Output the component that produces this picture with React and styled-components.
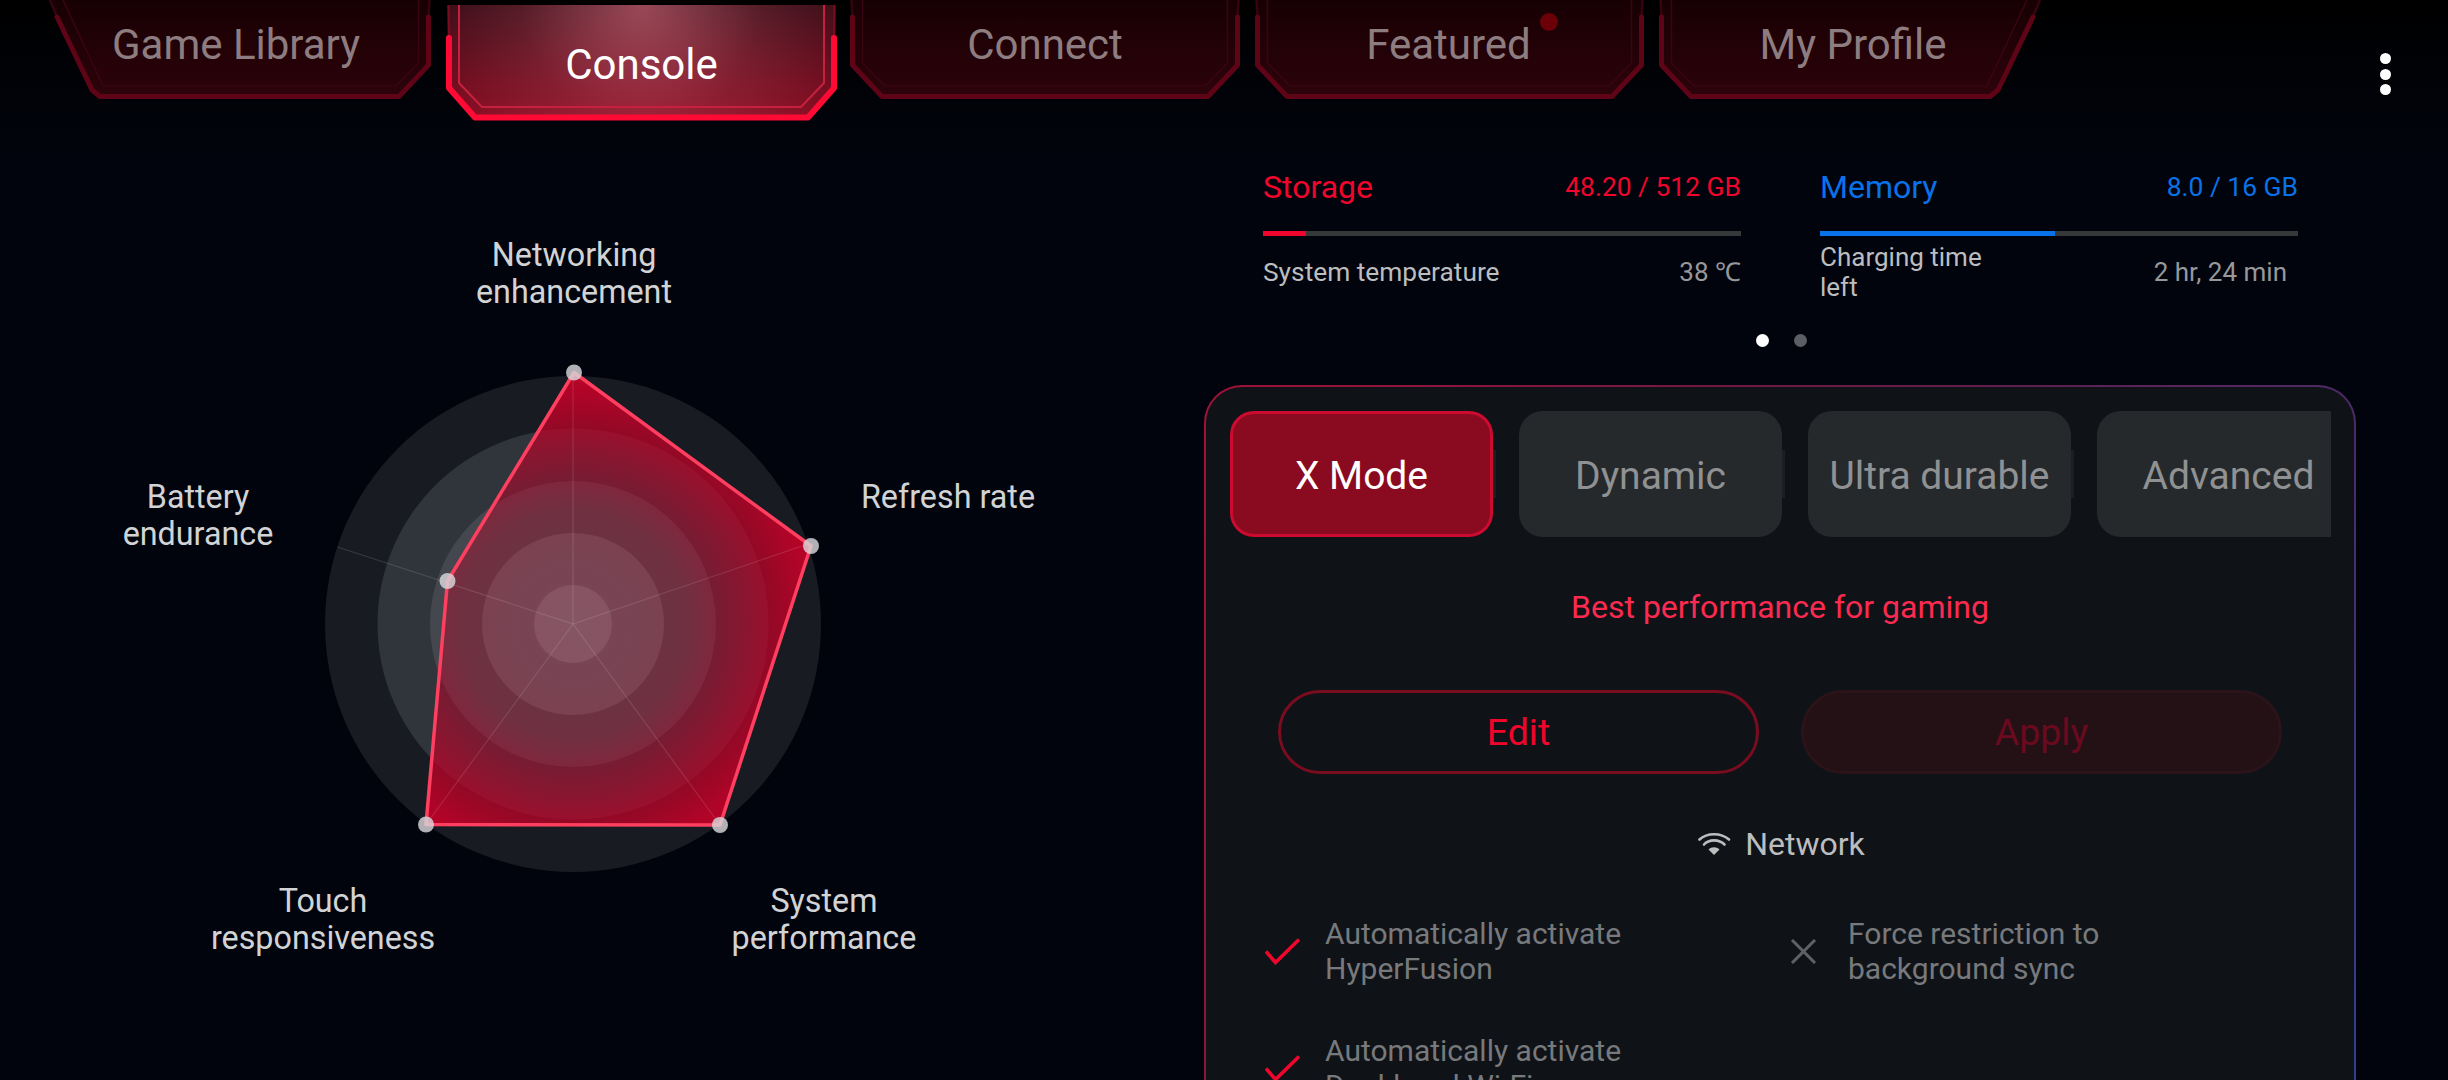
import styled, { createGlobalStyle } from 'styled-components';

const GlobalStyle = createGlobalStyle`
  * { box-sizing: border-box; }
  html, body { margin: 0; padding: 0; background: #01040c; }
  body { font-family: Roboto, "Liberation Sans", sans-serif; }
`;

const Screen = styled.div`
  width: 2448px;
  height: 1080px;
  overflow: hidden;
  display: flex;
  flex-direction: column;
  background: linear-gradient(180deg, #000000 0%, #01040c 14%, #01040c 100%);
`;

const Nav = styled.nav`
  display: flex;
  align-items: flex-start;
  gap: 15px;
  height: 121px;
  padding-left: 49px;
  flex-shrink: 0;
`;

const Tab = styled.div`
  position: relative;
  flex-shrink: 0;
  width: ${(p) => p.$width}px;
  height: ${(p) => (p.$active ? 116 : 99)}px;
  margin-top: ${(p) => (p.$active ? 5 : 0)}px;
  margin-right: ${(p) => (p.$active ? -2 : 0)}px;
  padding: ${(p) => (p.$active ? '3px 0 0' : '0 0 10px')};
  display: flex;
  align-items: center;
  justify-content: center;
  font-size: 42px;
  color: ${(p) => (p.$active ? '#ffffff' : '#8d7d80')};
`;

const TabShape = styled.svg`
  position: absolute;
  left: 0;
  top: 0;
  overflow: visible;
`;

const TabLabel = styled.span`
  position: relative;
  margin-left: ${(p) => p.$nudge || 0}px;
`;

const NoticeDot = styled.i`
  position: absolute;
  left: 285px;
  top: 13px;
  width: 18px;
  height: 18px;
  border-radius: 50%;
  background: #6b0008;
`;

const Kebab = styled.div`
  margin: 53px 57px 0 auto;
  display: flex;
  flex-direction: column;
  gap: 4.5px;

  i {
    width: 11px;
    height: 11px;
    border-radius: 50%;
    background: #ffffff;
  }
`;

const Main = styled.main`
  display: flex;
  flex: 1;
  min-height: 0;
`;

const RadarCanvas = styled.section`
  position: relative;
  width: 1204px;
  height: 959px;
  flex-shrink: 0;

  svg { display: block; }
`;

const AxisLabel = styled.div`
  position: absolute;
  left: ${(p) => p.$x}px;
  top: ${(p) => p.$y}px;
  transform: translateX(-50%);
  font-size: 32.3px;
  line-height: 37.5px;
  color: #d2d3d5;
  text-align: center;
  white-space: nowrap;
`;

const RightColumn = styled.section`
  width: 1152px;
  flex-shrink: 0;
`;

const Stats = styled.div`
  display: grid;
  grid-template-columns: 478px 478px;
  column-gap: 79px;
  margin: 47px 0 0 59px;
`;

const StatHead = styled.div`
  display: flex;
  align-items: center;
  justify-content: space-between;
  height: 38px;
  color: ${(p) => p.$color};
`;

const StatName = styled.span`
  font-size: 32px;
`;

const StatValue = styled.span`
  font-size: 26.4px;
`;

const Track = styled.div`
  height: 5px;
  margin-top: 25px;
  background: #37383a;
`;

const Fill = styled.div`
  height: 100%;
  background: ${(p) => p.$color};
`;

const StatRow = styled.div`
  display: flex;
  align-items: center;
  justify-content: space-between;
  height: 60px;
  margin-top: 6px;
  padding-right: ${(p) => p.$inset || 0}px;
  font-size: 26px;
  line-height: 30px;
`;

const RowLabel = styled.span`
  max-width: 200px;
  color: #bcbdbf;
`;

const SingleLabel = styled(RowLabel)`
  max-width: none;
  font-size: 26.3px;
`;

const RowValue = styled.span`
  color: #97989a;
`;

const Pager = styled.div`
  display: flex;
  justify-content: center;
  gap: 25px;
  margin: 32px 0 0 2px;
`;

const PagerDot = styled.i`
  width: 13px;
  height: 13px;
  border-radius: 50%;
  background: ${(p) => (p.$on ? '#ffffff' : '#5b5e63')};
`;

const Panel = styled.div`
  height: 800px;
  margin-top: 38px;
  border: 2px solid transparent;
  border-radius: 38px;
  background:
    linear-gradient(#0f1317, #0f1317) padding-box,
    linear-gradient(105deg, #a01238 0%, #6a1a44 45%, #4c2a66 85%, #2a4592 100%) border-box;
  display: flex;
  flex-direction: column;
  align-items: center;
  overflow: hidden;
`;

const ModeScroller = styled.div`
  align-self: flex-start;
  display: flex;
  gap: 26px;
  width: 1101px;
  margin: 24px 0 0 24px;
  overflow: hidden;
  flex-shrink: 0;
`;

const Mode = styled.div`
  position: relative;
  flex: 0 0 263px;
  height: 126px;
  padding-top: 4px;
  border-radius: 24px;
  display: flex;
  align-items: center;
  justify-content: center;
  font-size: 39px;
  color: ${(p) => (p.$active ? '#ffffff' : '#8f9193')};
  background: ${(p) => (p.$active ? '#8a0a20' : '#26292c')};
  border: ${(p) => (p.$active ? '3px solid #cd0a30' : 'none')};
`;

const ModeSliver = styled.i`
  flex: 0 0 3px;
  height: 48px;
  margin: 39px -3px 0 -26px;
  background: #1b1f22;
`;

const Tagline = styled.div`
  margin-top: 50px;
  height: 40px;
  line-height: 40px;
  font-size: 32px;
  color: #fb2a50;
`;

const Actions = styled.div`
  display: flex;
  gap: 42px;
  margin-top: 63px;
`;

const Pill = styled.div`
  width: 481px;
  height: 84px;
  border-radius: 42px;
  display: flex;
  align-items: center;
  justify-content: center;
  font-size: 37.5px;
  color: ${(p) => (p.$disabled ? '#6b0a1e' : '#f0052d')};
  background: ${(p) => (p.$disabled ? '#241116' : 'transparent')};
  border: 3px solid ${(p) => (p.$disabled ? '#2a1319' : '#7a0c20')};
`;

const Section = styled.div`
  display: flex;
  align-items: center;
  gap: 14px;
  margin: 50px 0 0 3px;
  height: 40px;
  font-size: 32px;
  color: #bcbdbf;
`;

const Features = styled.div`
  align-self: flex-start;
  display: grid;
  grid-template-columns: 525px 500px;
  row-gap: 47px;
  margin: 52px 0 0 59px;
`;

const Feature = styled.div`
  display: flex;
  align-items: center;
  gap: ${(p) => p.$gap}px;
  font-size: 30px;
  line-height: 35px;
  color: #77797c;
`;

const FeatureWide = styled(Feature)`
  grid-column: 1 / 3;
`;

// corner points of a tab edge, measured from the tab's own left side
const edges = {
  slant: { top: [1, 0], start: [8, 17], knee: [43, 90], foot: [51, 96.5], innerTop: [14, 0], innerFoot: [54, 86] },
  chamfer: { top: [1.5, 0], start: [2.5, 17], knee: [2.5, 65], foot: [32, 96.5], innerTop: [12.5, 0], innerKnee: [12.5, 63], innerFoot: [35, 86] },
  active: { top: [2.5, 0], start: [3, 33], knee: [3, 83], foot: [29, 112.5], innerTop: [13, 0], innerKnee: [13, 78], innerFoot: [36, 102] },
};

function TabFrame({ id, width, height, left, right, active }) {
  const l = edges[left];
  const r = edges[right];
  const L = (p) => `${p[0]},${p[1]}`;
  const R = (p) => `${width - p[0]},${p[1]}`;

  const fill = `M${L(l.top)} L${L(l.start)} L${L(l.knee)} L${L(l.foot)} L${R(r.foot)} L${R(r.knee)} L${R(r.start)} L${R(r.top)} Z`;
  const heavy = `M${L(l.start)} L${L(l.knee)} L${L(l.foot)} L${R(r.foot)} L${R(r.knee)} L${R(r.start)}`;
  const thin = `M${L(l.top)} L${L(l.start)} M${R(r.top)} L${R(r.start)}`;
  const innerLeft = [l.innerTop, l.innerKnee, l.innerFoot].filter(Boolean).map(L);
  const innerRight = [r.innerFoot, r.innerKnee, r.innerTop].filter(Boolean).map(R);
  const inner = `M${[...innerLeft, ...innerRight].join(' L')}`;

  return (
    <TabShape width={width} height={height} viewBox={`0 0 ${width} ${height}`}>
      <defs>
        <linearGradient id={`${id}-base`} x1="0" y1="0" x2="0" y2="1">
          <stop offset="0" stopColor={active ? '#30060f' : '#170003'} />
          <stop offset="1" stopColor={active ? '#84071d' : '#2d030b'} />
        </linearGradient>
        <radialGradient id={`${id}-glow`} gradientUnits="userSpaceOnUse" cx={width / 2} cy="0" r="240">
          <stop offset="0" stopColor="#ff8ca0" stopOpacity={active ? 0.5 : 0} />
          <stop offset="0.5" stopColor="#ff8ca0" stopOpacity={active ? 0.17 : 0} />
          <stop offset="1" stopColor="#ff8ca0" stopOpacity="0" />
        </radialGradient>
      </defs>
      <path d={fill} fill={`url(#${id}-base)`} />
      <path d={fill} fill={`url(#${id}-glow)`} />
      <path d={inner} fill="none" stroke={active ? '#c5213f' : '#3a0512'} strokeWidth={active ? 2 : 1.5} />
      <path d={thin} fill="none" stroke={active ? '#7a0a20' : '#36040f'} strokeWidth="2.5" />
      <path d={heavy} fill="none" stroke={active ? '#ff0a34' : '#5e0416'} strokeWidth={active ? 6 : 5} strokeLinejoin="round" strokeLinecap="round" />
    </TabShape>
  );
}

function Radar() {
  const rings = [
    [248, '#181c22'],
    [195.5, '#30343b'],
    [143, '#44484e'],
    [91, '#5a5e64'],
    [39, '#6e7278'],
  ];
  const points = [[574, 372.5], [811, 546], [720, 825], [426, 824.5], [447.5, 581]];
  const axes = [[573, 372.5], [811, 543], [720, 825], [426, 824.5], [337.5, 547]];
  const outline = points.map((p) => p.join(',')).join(' ');

  return (
    <svg width="1204" height="959" viewBox="0 121 1204 959">
      <defs>
        <radialGradient id="radar-fill" gradientUnits="userSpaceOnUse" cx="573" cy="624" r="300">
          <stop offset="0" stopColor="#c80028" stopOpacity="0.25" />
          <stop offset="0.2" stopColor="#c80028" stopOpacity="0.28" />
          <stop offset="0.38" stopColor="#c80028" stopOpacity="0.33" />
          <stop offset="0.57" stopColor="#c80028" stopOpacity="0.58" />
          <stop offset="0.77" stopColor="#c80028" stopOpacity="0.86" />
          <stop offset="0.97" stopColor="#d00028" stopOpacity="1" />
        </radialGradient>
      </defs>
      {rings.map(([r, fill]) => (
        <circle key={r} cx="573" cy="624" r={r} fill={fill} />
      ))}
      <polygon points={outline} fill="url(#radar-fill)" />
      {axes.map(([x, y]) => (
        <line key={x} x1="573" y1="624" x2={x} y2={y} stroke="#ffffff" strokeOpacity="0.13" strokeWidth="1.1" />
      ))}
      <polygon points={outline} fill="none" stroke="#ff3f60" strokeWidth="3.5" strokeLinejoin="round" />
      {points.map(([x, y]) => (
        <circle key={x} cx={x} cy={y} r="8" fill="#d8d8da" fillOpacity="0.82" />
      ))}
    </svg>
  );
}

function WifiIcon() {
  return (
    <svg width="33" height="24" viewBox="0 0 33 24" fill="none" stroke="#bcbdbf" strokeWidth="2.6" strokeLinecap="round">
      <path d="M1.5 7.5 C9 0.5 23 0.5 31 7.5" />
      <path d="M6 12.5 C11 7 21 7 26.5 12.5" />
      <path d="M10.5 17.5 L16 23 L21.5 17.5 C18.5 14.5 13.5 14.5 10.5 17.5 Z" fill="#bcbdbf" stroke="none" />
    </svg>
  );
}

function CheckIcon() {
  return (
    <svg width="35" height="27" viewBox="0 0 35 27" fill="none" stroke="#f0052d" strokeWidth="3.6">
      <path d="M1 13.5 L10.5 24.5 L34 1.5" />
    </svg>
  );
}

function CrossIcon() {
  return (
    <svg width="27" height="25" viewBox="0 0 27 25" fill="none" stroke="#5f6265" strokeWidth="3">
      <path d="M2 1 L25 24 M25 1 L2 24" />
    </svg>
  );
}

const tabs = [
  { key: 'game', label: 'Game Library', width: 382, left: 'slant', right: 'chamfer', nudge: -8 },
  { key: 'console', label: 'Console', width: 391, left: 'active', right: 'active', active: true },
  { key: 'connect', label: 'Connect', width: 390, left: 'chamfer', right: 'chamfer' },
  { key: 'featured', label: 'Featured', width: 389, left: 'chamfer', right: 'chamfer', notice: true, nudge: -2 },
  { key: 'profile', label: 'My Profile', width: 382, left: 'chamfer', right: 'slant', nudge: 6 },
];

const labels = [
  { x: 574, y: 115.5, lines: ['Networking', 'enhancement'] },
  { x: 948, y: 357.5, lines: ['Refresh rate'] },
  { x: 824, y: 761.5, lines: ['System', 'performance'] },
  { x: 323, y: 761.5, lines: ['Touch', 'responsiveness'] },
  { x: 198, y: 357.5, lines: ['Battery', 'endurance'] },
];

const modes = ['X Mode', 'Dynamic', 'Ultra durable', 'Advanced'];

function ModeItem({ active, label, sliver }) {
  return (
    <>
      <Mode $active={active}>{label}</Mode>
      {sliver && <ModeSliver />}
    </>
  );
}

export default function App() {
  return (
    <>
      <GlobalStyle />
      <Screen>
        <Nav>
          {tabs.map((t) => (
            <Tab key={t.key} $width={t.width} $active={t.active}>
              <TabFrame id={t.key} width={t.width} height={t.active ? 116 : 99} left={t.left} right={t.right} active={t.active} />
              <TabLabel $nudge={t.nudge}>{t.label}</TabLabel>
              {t.notice && <NoticeDot />}
            </Tab>
          ))}
          <Kebab><i /><i /><i /></Kebab>
        </Nav>
        <Main>
          <RadarCanvas>
            <Radar />
            {labels.map((l) => (
              <AxisLabel key={l.lines[0]} $x={l.x} $y={l.y}>
                {l.lines.map((line) => <div key={line}>{line}</div>)}
              </AxisLabel>
            ))}
          </RadarCanvas>
          <RightColumn>
            <Stats>
              <div>
                <StatHead $color="#f0052d">
                  <StatName>Storage</StatName>
                  <StatValue>48.20 / 512 GB</StatValue>
                </StatHead>
                <Track><Fill $color="#f0052d" style={{ width: '9%' }} /></Track>
                <StatRow>
                  <SingleLabel>System temperature</SingleLabel>
                  <RowValue>38 ℃</RowValue>
                </StatRow>
              </div>
              <div>
                <StatHead $color="#0a72e8">
                  <StatName>Memory</StatName>
                  <StatValue>8.0 / 16 GB</StatValue>
                </StatHead>
                <Track><Fill $color="#0a72e8" style={{ width: '49.2%' }} /></Track>
                <StatRow $inset={11}>
                  <RowLabel>Charging time left</RowLabel>
                  <RowValue>2 hr, 24 min</RowValue>
                </StatRow>
              </div>
            </Stats>
            <Pager><PagerDot $on /><PagerDot /></Pager>
            <Panel>
              <ModeScroller>
                {modes.map((m, i) => (
                  <ModeItem key={m} active={i === 0} label={m} sliver={i < 3} />
                ))}
              </ModeScroller>
              <Tagline>Best performance for gaming</Tagline>
              <Actions>
                <Pill>Edit</Pill>
                <Pill $disabled>Apply</Pill>
              </Actions>
              <Section><WifiIcon />Network</Section>
              <Features>
                <Feature $gap={25}>
                  <CheckIcon />
                  <div>Automatically activate<br />HyperFusion</div>
                </Feature>
                <Feature $gap={31}>
                  <CrossIcon />
                  <div>Force restriction to<br />background sync</div>
                </Feature>
                <FeatureWide $gap={25}>
                  <CheckIcon />
                  <div>Automatically activate<br />Dual-band Wi-Fi</div>
                </FeatureWide>
              </Features>
            </Panel>
          </RightColumn>
        </Main>
      </Screen>
    </>
  );
}
